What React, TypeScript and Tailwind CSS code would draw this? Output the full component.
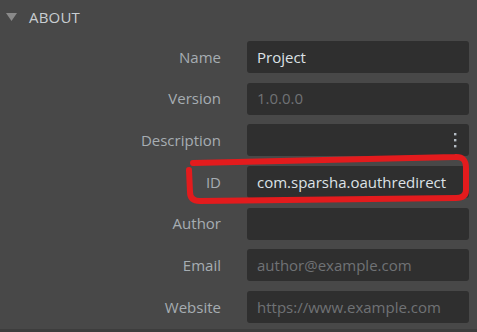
import React from 'react';

type Field = {
    label: string;
    value?: string;
    placeholder?: string;
    menu?: boolean;
};

const FIELDS: Field[] = [
    { label: 'Name', value: 'Project' },
    { label: 'Version', placeholder: '1.0.0.0' },
    { label: 'Description', menu: true },
    { label: 'ID', value: 'com.sparsha.oauthredirect' },
    { label: 'Author' },
    { label: 'Email', placeholder: 'author@example.com' },
    { label: 'Website', placeholder: 'https://www.example.com' },
];

const MoreVertical: React.FC = () => (
    <svg width="4" height="16" viewBox="0 0 4 16" className="text-[#b4bcc4]">
        <rect x="1" y="1" width="2.4" height="2.4" fill="currentColor" />
        <rect x="1" y="7" width="2.4" height="2.4" fill="currentColor" />
        <rect x="1" y="13" width="2.4" height="2.4" fill="currentColor" />
    </svg>
);

const App: React.FC = () => {
    return (
        <div
            className="relative w-[477px] h-[332px] overflow-hidden bg-[#484848] flex flex-col"
            style={{ fontFamily: '"Open Sans", "Noto Sans", sans-serif' }}
        >
            {/* section header */}
            <div className="h-[34px] flex items-center pl-[6px] gap-[12px] shrink-0">
                <svg width="11" height="8" viewBox="0 0 11 8">
                    <path d="M0 0 L11 0 L5.5 8 Z" fill="#8a8a8a" />
                </svg>
                <span className="text-[15px] text-[#c9ced2] tracking-[0.2px]">ABOUT</span>
            </div>

            {/* form rows */}
            <div className="flex-1 flex flex-col gap-[9.67px] pt-[7px] pr-[8px]">
                {FIELDS.map(f => (
                    <div key={f.label} className="grid grid-cols-[221px_1fr] gap-[26px] items-center">
                        <span className="text-right text-[15px] text-[#a6adb2]">{f.label}</span>
                        <div className="h-[32px] rounded-[3px] bg-[#2f2f2f] flex items-center pl-[10px] pr-[12px]">
                            {f.value && <span className="text-[15px] text-[#dde2e6] whitespace-nowrap">{f.value}</span>}
                            {f.placeholder && <span className="text-[15px] text-[#6f7275] whitespace-nowrap">{f.placeholder}</span>}
                            {f.menu && (
                                <div className="ml-auto flex items-center">
                                    <MoreVertical />
                                </div>
                            )}
                        </div>
                    </div>
                ))}
            </div>

            <div className="h-[3px] bg-[#3d3d3d] shrink-0" />

            {/* red hand-drawn highlight */}
            <svg className="absolute left-0 top-0 pointer-events-none" width="477" height="332">
                <path
                    d="M193 163 L455 157 Q466 156 466 168 L466 190 Q466 198 456 198 L200 201 Q190 201 190 192 L189 170"
                    fill="none"
                    stroke="#e31b1d"
                    strokeWidth="6"
                    strokeLinecap="round"
                    strokeLinejoin="round"
                />
            </svg>
        </div>
    );
};

export default App;
